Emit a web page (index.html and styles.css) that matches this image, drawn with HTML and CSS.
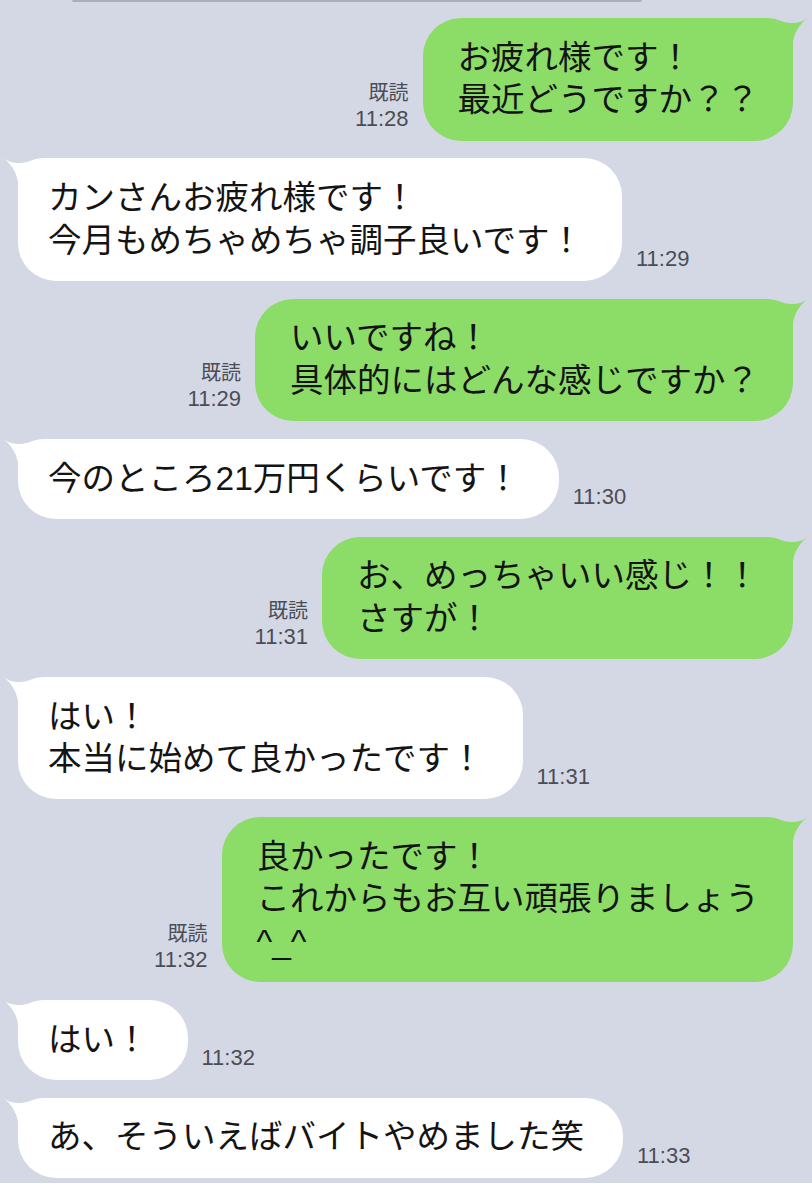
FILE: index.html
```html
<!DOCTYPE html>
<html lang="ja">
<head>
<meta charset="utf-8">
<title>LINE chat</title>
<link rel="stylesheet" href="styles.css">
</head>
<body>
<div class="chat">
  <div class="prev"></div>
  <div class="thread">
    <div class="row me">
      <div class="meta"><span class="read">既読</span><span class="time">11:28</span></div>
      <div class="bubble green"><svg class="tail" viewBox="0 0 58 44" width="58" height="44"><path d="M0,0 L18,0 C28,0 34,5 42,5 C50,5 55,3 58,0 C52,6 46,12 44,24 L44,44 L0,44 Z"/></svg><p class="text">お疲れ様です！<br>最近どうですか？？</p></div>
    </div>
    <div class="row them">
      <div class="bubble white"><svg class="tail" viewBox="0 0 58 44" width="58" height="44"><path d="M0,0 L18,0 C28,0 34,5 42,5 C50,5 55,3 58,0 C52,6 46,12 44,24 L44,44 L0,44 Z"/></svg><p class="text">カンさんお疲れ様です！<br>今月もめちゃめちゃ調子良いです！</p></div>
      <div class="meta"><span class="time">11:29</span></div>
    </div>
    <div class="row me">
      <div class="meta"><span class="read">既読</span><span class="time">11:29</span></div>
      <div class="bubble green"><svg class="tail" viewBox="0 0 58 44" width="58" height="44"><path d="M0,0 L18,0 C28,0 34,5 42,5 C50,5 55,3 58,0 C52,6 46,12 44,24 L44,44 L0,44 Z"/></svg><p class="text">いいですね！<br>具体的にはどんな感じですか？</p></div>
    </div>
    <div class="row them">
      <div class="bubble white"><svg class="tail" viewBox="0 0 58 44" width="58" height="44"><path d="M0,0 L18,0 C28,0 34,5 42,5 C50,5 55,3 58,0 C52,6 46,12 44,24 L44,44 L0,44 Z"/></svg><p class="text">今のところ21万円くらいです！</p></div>
      <div class="meta"><span class="time">11:30</span></div>
    </div>
    <div class="row me">
      <div class="meta"><span class="read">既読</span><span class="time">11:31</span></div>
      <div class="bubble green"><svg class="tail" viewBox="0 0 58 44" width="58" height="44"><path d="M0,0 L18,0 C28,0 34,5 42,5 C50,5 55,3 58,0 C52,6 46,12 44,24 L44,44 L0,44 Z"/></svg><p class="text">お、めっちゃいい感じ！！<br>さすが！</p></div>
    </div>
    <div class="row them">
      <div class="bubble white"><svg class="tail" viewBox="0 0 58 44" width="58" height="44"><path d="M0,0 L18,0 C28,0 34,5 42,5 C50,5 55,3 58,0 C52,6 46,12 44,24 L44,44 L0,44 Z"/></svg><p class="text">はい！<br>本当に始めて良かったです！</p></div>
      <div class="meta"><span class="time">11:31</span></div>
    </div>
    <div class="row me">
      <div class="meta"><span class="read">既読</span><span class="time">11:32</span></div>
      <div class="bubble green"><svg class="tail" viewBox="0 0 58 44" width="58" height="44"><path d="M0,0 L18,0 C28,0 34,5 42,5 C50,5 55,3 58,0 C52,6 46,12 44,24 L44,44 L0,44 Z"/></svg><p class="text">良かったです！<br>これからもお互い頑張りましょう<br>^_^</p></div>
    </div>
    <div class="row them">
      <div class="bubble white"><svg class="tail" viewBox="0 0 58 44" width="58" height="44"><path d="M0,0 L18,0 C28,0 34,5 42,5 C50,5 55,3 58,0 C52,6 46,12 44,24 L44,44 L0,44 Z"/></svg><p class="text">はい！</p></div>
      <div class="meta"><span class="time">11:32</span></div>
    </div>
    <div class="row them">
      <div class="bubble white"><svg class="tail" viewBox="0 0 58 44" width="58" height="44"><path d="M0,0 L18,0 C28,0 34,5 42,5 C50,5 55,3 58,0 C52,6 46,12 44,24 L44,44 L0,44 Z"/></svg><p class="text">あ、そういえばバイトやめました笑</p></div>
      <div class="meta"><span class="time">11:33</span></div>
    </div>
  </div>
</div>
</body>
</html>
```

FILE: styles.css
```css
* { box-sizing: border-box; }

html, body {
  margin: 0;
  padding: 0;
  background: #ffffff;
}

body {
  width: 812px;
  font-family: "Liberation Sans", "Noto Sans CJK JP", sans-serif;
}

.chat {
  height: 1183px;
  background: #d4d8e5;
  overflow: hidden;
}

.prev {
  width: 570px;
  height: 2px;
  margin-left: 72px;
  background: #aaaebb;
  border-radius: 0 0 4px 4px;
}

.thread {
  display: flex;
  flex-direction: column;
  gap: 17.75px;
  padding-top: 16px;
}

.row {
  display: flex;
  align-items: flex-end;
}

.row.me {
  justify-content: flex-end;
  padding-right: 19px;
}

.row.them {
  justify-content: flex-start;
  padding-left: 18px;
}

.bubble {
  position: relative;
  z-index: 0;
  border-radius: 38px;
}

.text {
  position: relative;
  z-index: 1;
  margin: 0;
  font-family: "Liberation Sans", "Noto Sans CJK JP", sans-serif;
  font-size: 33.5px;
  line-height: 42.5px;
  color: #141414;
  white-space: nowrap;
}

.bubble.green {
  background: #8cdc68;
  padding: 18.75px 34px 18.75px 35px;
}

.bubble.white {
  background: #ffffff;
  padding: 18.75px 39px 18.75px 30px;
}

.tail {
  position: absolute;
  z-index: 0;
  top: 0;
  display: block;
}

.green .tail {
  right: -14px;
  fill: #8cdc68;
}

.white .tail {
  left: -14px;
  fill: #ffffff;
  transform: scaleX(-1);
}

.meta {
  display: flex;
  flex-direction: column;
  font-family: "Liberation Sans", "Noto Sans CJK JP", sans-serif;
  color: #4b4d56;
  line-height: 25px;
  margin-bottom: 10px;
}

.me .meta {
  align-items: flex-end;
  margin-right: 14px;
}

.them .meta {
  align-items: flex-start;
  margin-left: 14px;
}

.time {
  font-size: 22px;
}

.read {
  font-size: 20px;
}
```
